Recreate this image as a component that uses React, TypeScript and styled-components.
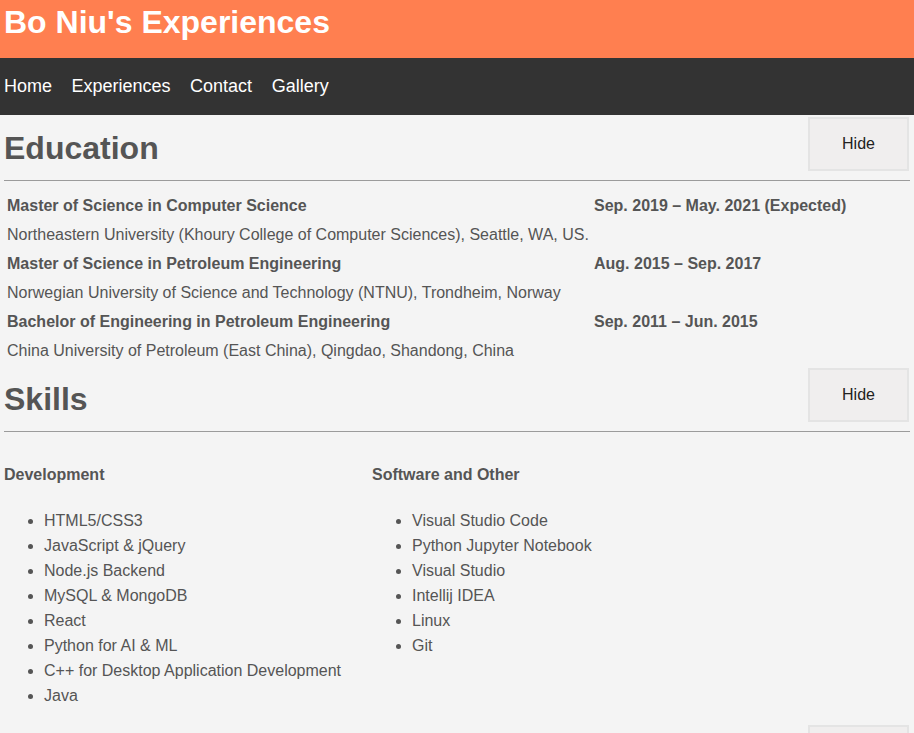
import React from "react";
import styled, { createGlobalStyle } from "styled-components";

const GlobalStyle = createGlobalStyle`
  html, body {
    margin: 0;
    padding: 0;
    background: #f4f4f4;
  }
  body {
    font-family: "Liberation Sans", Arial, sans-serif;
    color: #555;
    font-size: 16px;
  }
`;

const Header = styled.header`
  height: 58px;
  box-sizing: border-box;
  background: #ff7f50;
  padding: 4px 0 0 4px;
`;

const SiteTitle = styled.h1`
  margin: 0;
  font-size: 32px;
  line-height: 37px;
  font-weight: bold;
  color: #fff;
`;

const Nav = styled.nav`
  height: 57px;
  background: #333;
  display: flex;
  align-items: center;
  gap: 19.5px;
  padding-left: 4px;
`;

const NavLink = styled.a`
  color: #fff;
  font-size: 18px;
  text-decoration: none;
  line-height: 21px;
`;

const Main = styled.main`
  padding: 0 4px;
  display: flex;
  flex-direction: column;
`;

const Section = styled.section<{ $gapAfter?: number }>`
  display: flex;
  flex-direction: column;
  margin-bottom: ${(p) => p.$gapAfter ?? 0}px;
`;

const SectionHeader = styled.div`
  display: flex;
  justify-content: space-between;
  align-items: flex-start;
`;

const SectionTitle = styled.h1`
  margin: 15px 0 0 0;
  font-size: 32px;
  line-height: 37px;
  font-weight: bold;
  color: #555;
`;

const HideButton = styled.button`
  margin: 2px 1px 0 0;
  width: 101px;
  height: 54px;
  box-sizing: border-box;
  background: #f0eeee;
  border: 2px solid #e4e4e4;
  color: #222;
  font-family: "Liberation Sans", Arial, sans-serif;
  font-size: 16px;
  padding: 0;
`;

const Rule = styled.hr`
  margin: 9px 0 0 0;
  border: none;
  border-top: 1px solid #9b9b9b;
  height: 0;
`;

const EduTable = styled.div`
  display: grid;
  grid-template-columns: 585px auto;
  gap: 2px;
  padding: 2px;
  margin: 9px 0 0 0;
`;

const Cell = styled.div<{ $bold?: boolean }>`
  padding: 1px;
  line-height: 25px;
  font-weight: ${(p) => (p.$bold ? "bold" : "normal")};
  white-space: nowrap;
`;

const SkillsGrid = styled.div`
  display: grid;
  grid-template-columns: 368px 1fr;
  margin-top: 30px;
`;

const SkillColumn = styled.div`
  display: flex;
  flex-direction: column;
`;

const SkillHeading = styled.h4`
  margin: 0 0 21px 0;
  font-size: 16px;
  line-height: 25px;
  font-weight: bold;
`;

const SkillList = styled.ul`
  margin: 0;
  padding-left: 40px;
`;

const SkillItem = styled.li`
  line-height: 25px;
`;

const education = [
  {
    degree: "Master of Science in Computer Science",
    date: "Sep. 2019 – May. 2021 (Expected)",
    school:
      "Northeastern University (Khoury College of Computer Sciences), Seattle, WA, US.",
  },
  {
    degree: "Master of Science in Petroleum Engineering",
    date: "Aug. 2015 – Sep. 2017",
    school: "Norwegian University of Science and Technology (NTNU), Trondheim, Norway",
  },
  {
    degree: "Bachelor of Engineering in Petroleum Engineering",
    date: "Sep. 2011 – Jun. 2015",
    school: "China University of Petroleum (East China), Qingdao, Shandong, China",
  },
];

const skills = [
  {
    title: "Development",
    items: [
      "HTML5/CSS3",
      "JavaScript & jQuery",
      "Node.js Backend",
      "MySQL & MongoDB",
      "React",
      "Python for AI & ML",
      "C++ for Desktop Application Development",
      "Java",
    ],
  },
  {
    title: "Software and Other",
    items: [
      "Visual Studio Code",
      "Python Jupyter Notebook",
      "Visual Studio",
      "Intellij IDEA",
      "Linux",
      "Git",
    ],
  },
];

export default function App() {
  return (
    <>
      <GlobalStyle />
      <Header>
        <SiteTitle>Bo Niu's Experiences</SiteTitle>
      </Header>
      <Nav>
        <NavLink href="#">Home</NavLink>
        <NavLink href="#">Experiences</NavLink>
        <NavLink href="#">Contact</NavLink>
        <NavLink href="#">Gallery</NavLink>
      </Nav>
      <Main>
        <Section>
          <SectionHeader>
            <SectionTitle>Education</SectionTitle>
            <HideButton>Hide</HideButton>
          </SectionHeader>
          <Rule />
          <EduTable>
            {education.map((e) => (
              <React.Fragment key={e.degree}>
                <Cell $bold>{e.degree}</Cell>
                <Cell $bold>{e.date}</Cell>
                <Cell>{e.school}</Cell>
                <Cell />
              </React.Fragment>
            ))}
          </EduTable>
        </Section>
        <Section $gapAfter={15}>
          <SectionHeader>
            <SectionTitle>Skills</SectionTitle>
            <HideButton>Hide</HideButton>
          </SectionHeader>
          <Rule />
          <SkillsGrid>
            {skills.map((s) => (
              <SkillColumn key={s.title}>
                <SkillHeading>{s.title}</SkillHeading>
                <SkillList>
                  {s.items.map((i) => (
                    <SkillItem key={i}>{i}</SkillItem>
                  ))}
                </SkillList>
              </SkillColumn>
            ))}
          </SkillsGrid>
        </Section>
        <Section>
          <SectionHeader>
            <SectionTitle>Projects</SectionTitle>
            <HideButton>Hide</HideButton>
          </SectionHeader>
          <Rule />
        </Section>
      </Main>
    </>
  );
}
